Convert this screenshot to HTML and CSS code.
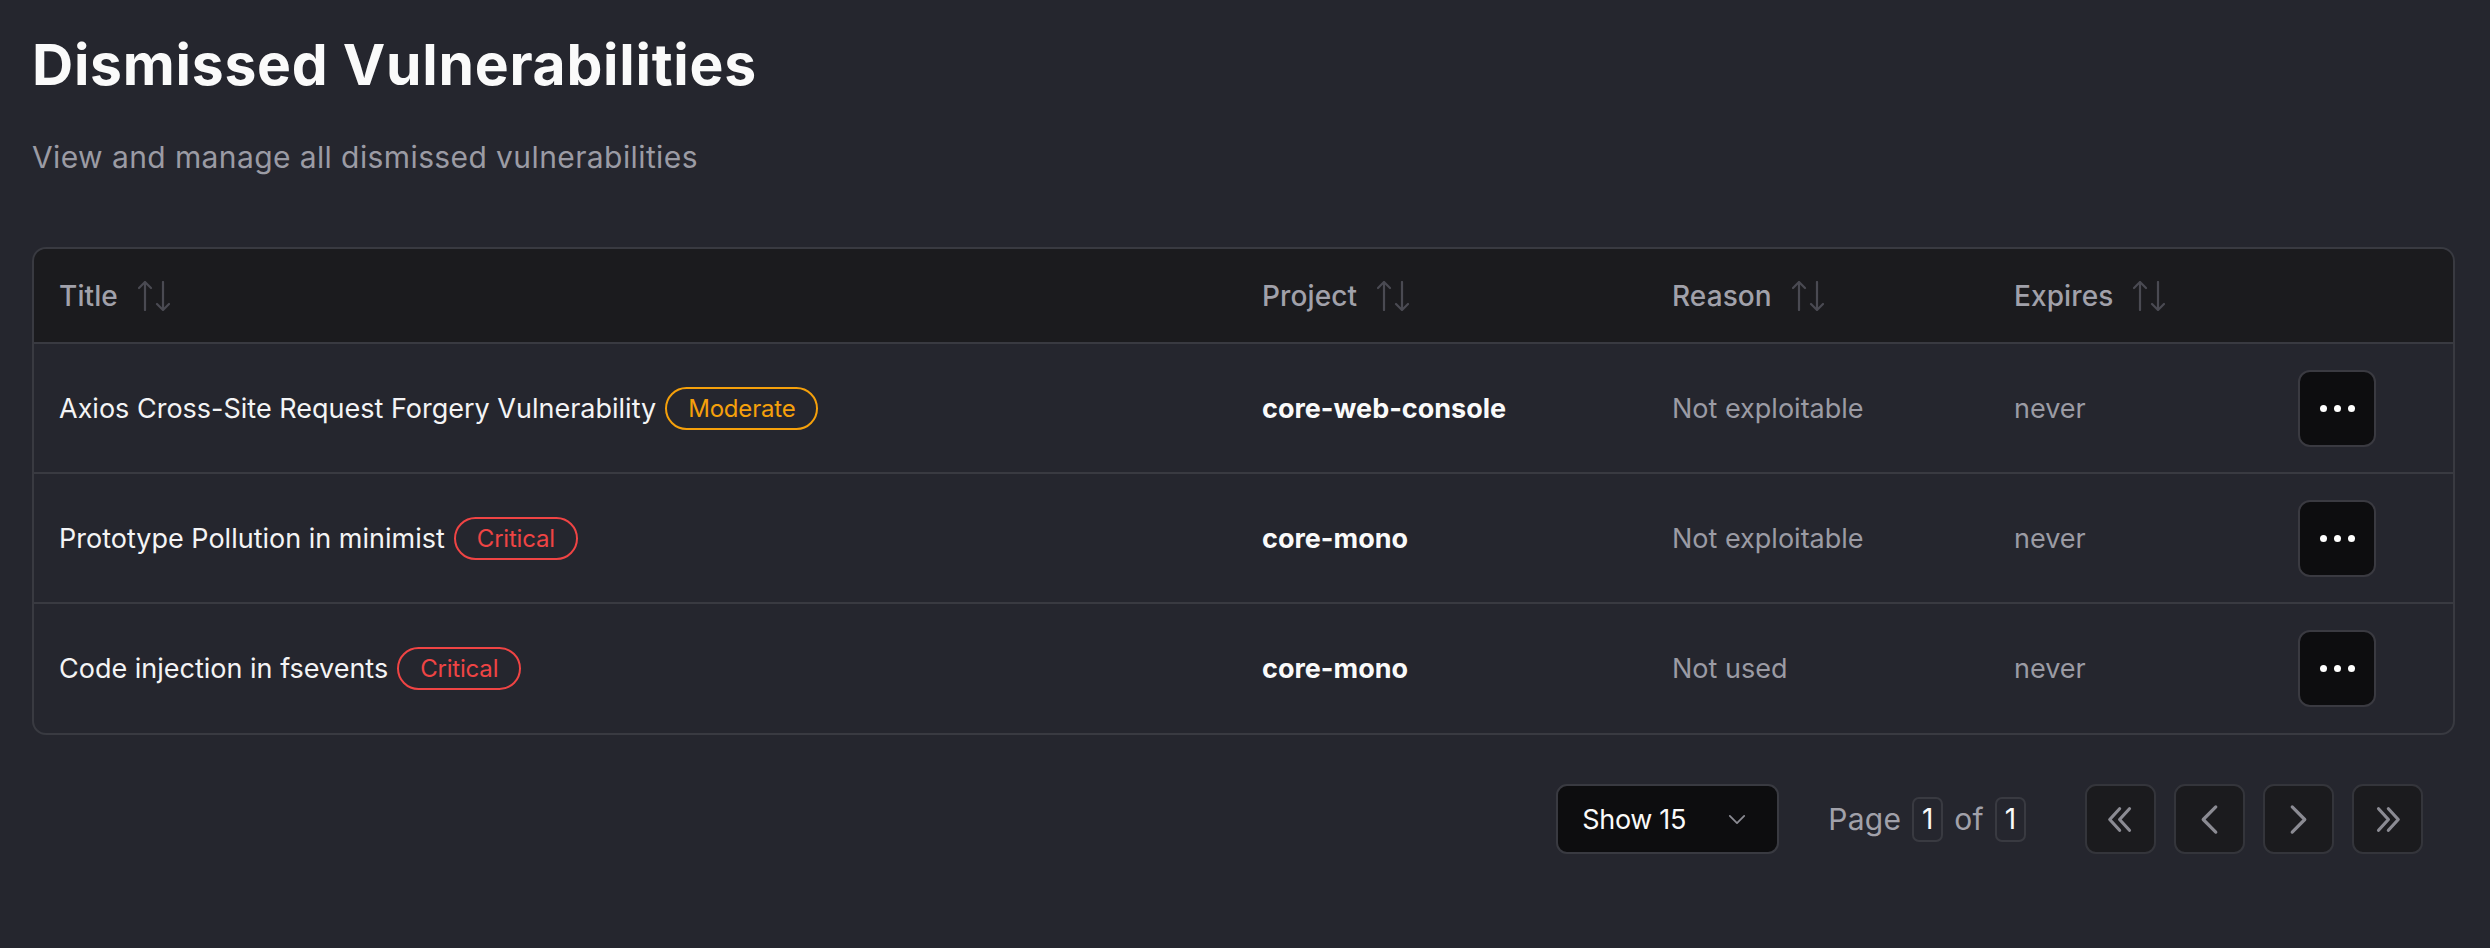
FILE: index.html
```html
<!DOCTYPE html>
<html lang="en">
<head>
<meta charset="utf-8">
<title>Dismissed Vulnerabilities</title>
<link rel="stylesheet" href="styles.css">
</head>
<body>
<main class="page">
  <h1 class="page-title">Dismissed Vulnerabilities</h1>
  <p class="page-subtitle">View and manage all dismissed vulnerabilities</p>

  <div class="table" role="table">
    <div class="row head" role="row">
      <div class="cell" role="columnheader">Title <svg class="sort" viewBox="0 0 32 30"><path d="M7 1V29M1 7L7 1L13 7M25 1V29M19 23L25 29L31 23"/></svg></div>
      <div class="cell" role="columnheader">Project <svg class="sort" viewBox="0 0 32 30"><path d="M7 1V29M1 7L7 1L13 7M25 1V29M19 23L25 29L31 23"/></svg></div>
      <div class="cell" role="columnheader">Reason <svg class="sort" viewBox="0 0 32 30"><path d="M7 1V29M1 7L7 1L13 7M25 1V29M19 23L25 29L31 23"/></svg></div>
      <div class="cell" role="columnheader">Expires <svg class="sort" viewBox="0 0 32 30"><path d="M7 1V29M1 7L7 1L13 7M25 1V29M19 23L25 29L31 23"/></svg></div>
      <div class="cell" role="columnheader"></div>
    </div>

    <div class="row" role="row">
      <div class="cell title-cell">Axios Cross-Site Request Forgery Vulnerability <span class="badge moderate">Moderate</span></div>
      <div class="cell project">core-web-console</div>
      <div class="cell muted">Not exploitable</div>
      <div class="cell muted">never</div>
      <div class="cell"><button class="more" aria-label="More"><i></i><i></i><i></i></button></div>
    </div>

    <div class="row" role="row">
      <div class="cell title-cell">Prototype Pollution in minimist <span class="badge critical">Critical</span></div>
      <div class="cell project">core-mono</div>
      <div class="cell muted">Not exploitable</div>
      <div class="cell muted">never</div>
      <div class="cell"><button class="more" aria-label="More"><i></i><i></i><i></i></button></div>
    </div>

    <div class="row last" role="row">
      <div class="cell title-cell">Code injection in fsevents <span class="badge critical">Critical</span></div>
      <div class="cell project">core-mono</div>
      <div class="cell muted">Not used</div>
      <div class="cell muted">never</div>
      <div class="cell"><button class="more" aria-label="More"><i></i><i></i><i></i></button></div>
    </div>
  </div>

  <div class="pager">
    <div class="select">
      <span>Show 15</span>
      <svg class="chev-down" viewBox="0 0 20 12"><path d="M2 2L10 10L18 2"/></svg>
    </div>
    <div class="page-info">
      <span>Page</span><span class="num">1</span><span>of</span><span class="num">1</span>
    </div>
    <div class="nav">
      <button class="nav-btn" aria-label="First page"><svg viewBox="0 0 24 24"><path d="M11.5 18L6 12L11.5 6M17 18L11.5 12L17 6"/></svg></button>
      <button class="nav-btn" aria-label="Previous page"><svg viewBox="0 0 24 24"><path d="M15.5 19L8.5 12L15.5 5"/></svg></button>
      <button class="nav-btn" aria-label="Next page"><svg viewBox="0 0 24 24"><path d="M8.5 19L15.5 12L8.5 5"/></svg></button>
      <button class="nav-btn" aria-label="Last page"><svg viewBox="0 0 24 24"><path d="M7 18L12.5 12L7 6M12.5 18L18 12L12.5 6"/></svg></button>
    </div>
  </div>
</main>
</body>
</html>
```

FILE: styles.css
```css
* { box-sizing: border-box; }

html, body {
  margin: 0;
  background: #25262e;
}

body {
  font-family: Inter, "Liberation Sans", sans-serif;
  color: #f4f4f5;
}

.page {
  padding: 31px 35px 40px 32px;
}

.page-title {
  margin: 0;
  font-size: 57px;
  line-height: 68px;
  font-weight: 700;
  letter-spacing: 0.75px;
  color: #fafafa;
}

.page-subtitle {
  margin: 37px 0 0;
  font-size: 30px;
  line-height: 42px;
  color: #9b9ba4;
  letter-spacing: 0.4px;
}

.table {
  margin-top: 69px;
  border: 2px solid #393a41;
  border-radius: 14px;
  overflow: hidden;
}

.row {
  display: grid;
  grid-template-columns: 1203px 410px 342px 284px 1fr;
  height: 130px;
  border-bottom: 2px solid #393a41;
  align-items: center;
}

.row.last { border-bottom: 0; height: 129px; }

.row.head {
  height: 95px;
  background: #1b1b1e;
}

.cell {
  padding-left: 25px;
  display: flex;
  align-items: center;
  font-size: 27px;
  white-space: nowrap;
}

.head .cell {
  color: #a1a1aa;
  font-weight: 500;
  font-size: 28px;
  letter-spacing: 0.1px;
}

.sort {
  width: 32px;
  height: 30px;
  margin-left: 20px;
  fill: none;
  stroke: #4a4a52;
  stroke-width: 2.2;
  stroke-linecap: round;
  stroke-linejoin: round;
}

.title-cell { color: #f4f4f5; }

.badge {
  margin-left: 9px;
  height: 43px;
  padding: 0 21px;
  border-radius: 22px;
  border: 2px solid currentColor;
  font-size: 24px;
  letter-spacing: -0.2px;
  display: inline-flex;
  align-items: center;
}

.moderate { color: #f5a00b; }
.critical { color: #ef4444; }

.project {
  font-weight: 700;
  color: #fafafa;
}

.muted { color: #9b9ba4; }

.more {
  width: 78px;
  height: 77px;
  border-radius: 12px;
  background: #0d0d0f;
  border: 2px solid #3a3a41;
  display: flex;
  align-items: center;
  justify-content: center;
  gap: 7px;
  padding: 0;
}

.more i {
  display: block;
  width: 7px;
  height: 7px;
  border-radius: 50%;
  background: #ffffff;
}

.pager {
  margin-top: 49px;
  display: flex;
  justify-content: flex-end;
  align-items: center;
  padding-right: 32px;
}

.select {
  width: 223px;
  height: 70px;
  background: #0d0d0f;
  border: 2px solid #393a41;
  border-radius: 11px;
  display: flex;
  align-items: center;
  justify-content: space-between;
  padding: 0 31px 0 24px;
  font-size: 27px;
  letter-spacing: -0.3px;
  color: #fafafa;
}

.chev-down {
  width: 18px;
  height: 11px;
  fill: none;
  stroke: #8b8b93;
  stroke-width: 2;
  stroke-linecap: round;
  stroke-linejoin: round;
}

.page-info {
  margin-left: 49px;
  display: flex;
  align-items: center;
  gap: 11px;
  font-size: 30px;
  letter-spacing: 0.3px;
  color: #a1a1aa;
}

.page-info .num {
  width: 31px;
  height: 45px;
  border: 2px solid #393a41;
  border-radius: 7px;
  color: #fafafa;
  font-size: 28px;
  display: flex;
  align-items: center;
  justify-content: center;
}

.nav {
  margin-left: 59px;
  display: flex;
  gap: 18px;
}

.nav-btn {
  width: 71px;
  height: 70px;
  border-radius: 11px;
  background: #1b1b1e;
  border: 2px solid #34353b;
  display: flex;
  align-items: center;
  justify-content: center;
  padding: 0;
}

.nav-btn svg {
  width: 43px;
  height: 43px;
  fill: none;
  stroke: #8b8b93;
  stroke-width: 1.8;
  stroke-linecap: round;
  stroke-linejoin: round;
}
```
